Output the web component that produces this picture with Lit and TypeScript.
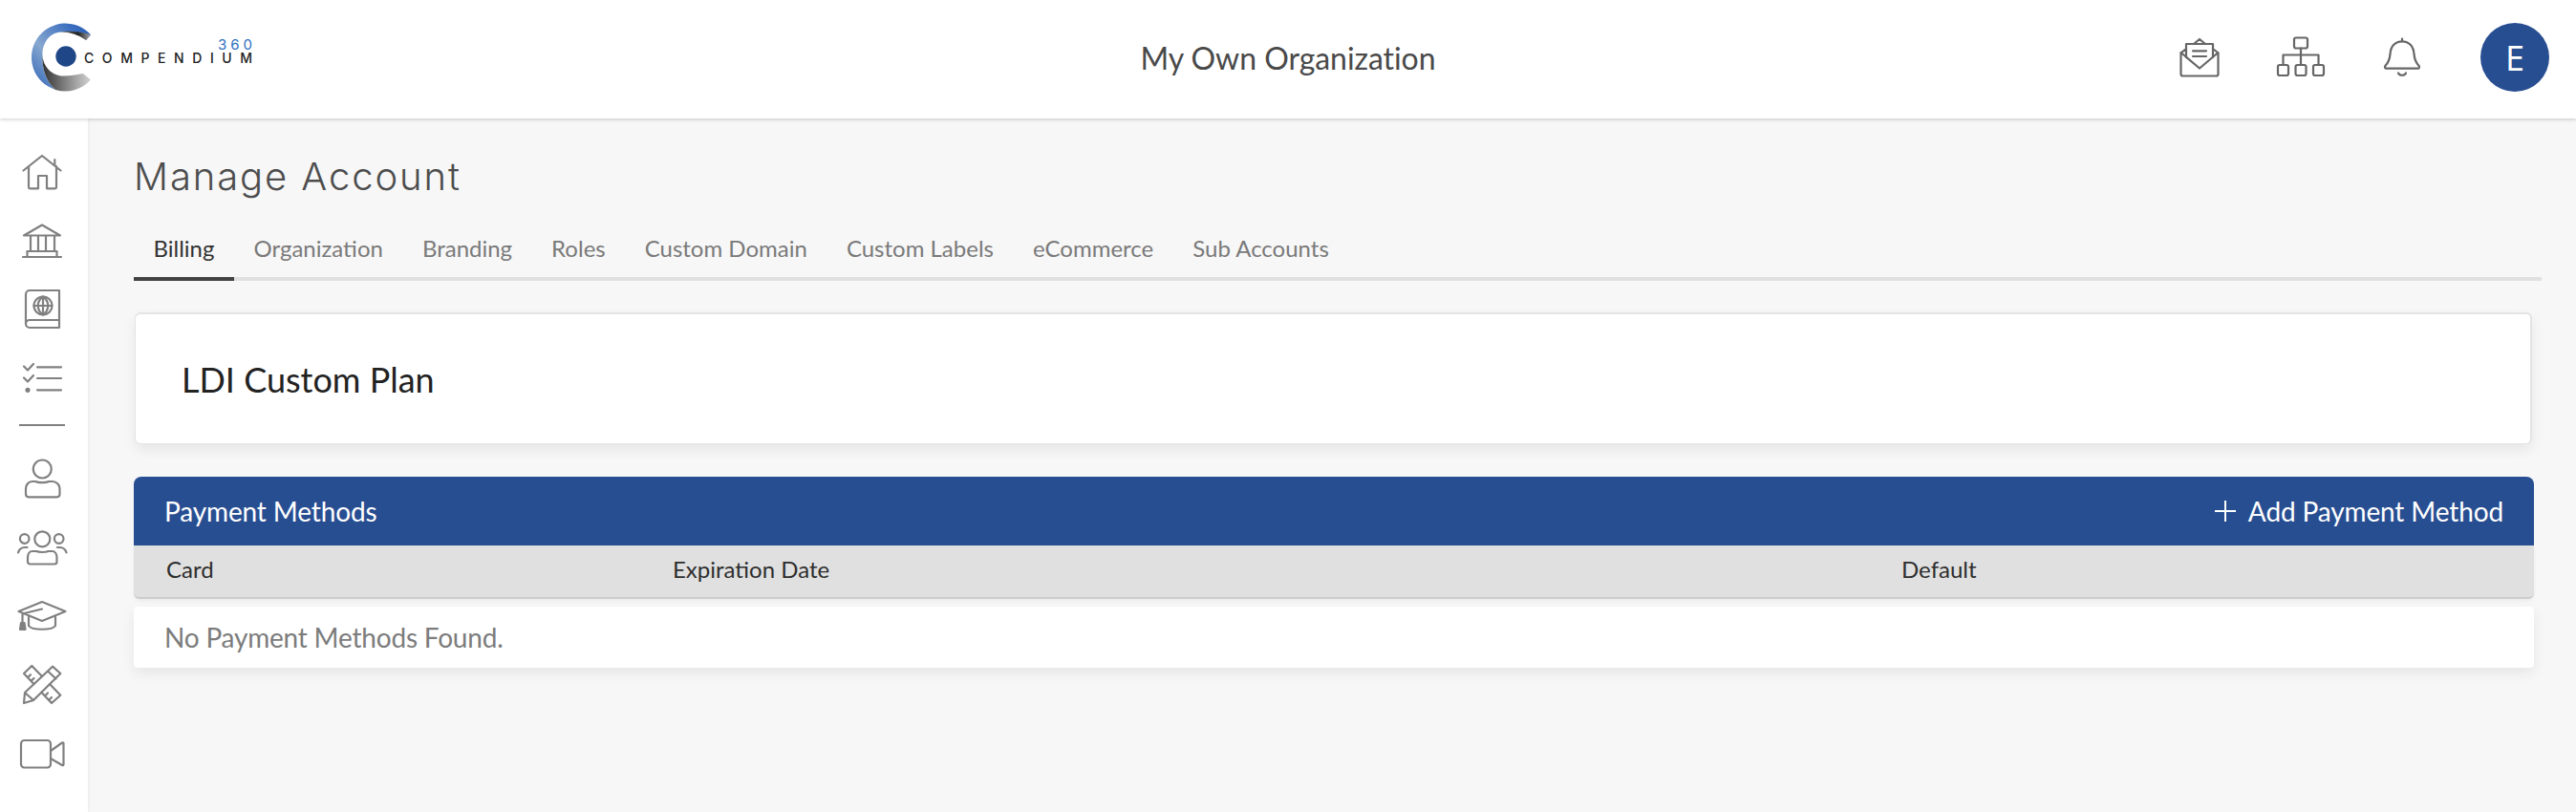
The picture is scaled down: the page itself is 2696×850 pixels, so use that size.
import { LitElement, html, css, svg } from "lit";
import { customElement } from "lit/decorators.js";

const side = [
  svg`<path d="M4.5 22.5 24 7l19.5 15.5M10 18v22a1.3 1.3 0 0 0 1.3 1.300H20V28h9v13.300h8.700A1.300 1.300 0 0 0 39 40V18M37.300 11.200v6"/>`,
  svg`<path d="M24 7.500 5 18.500h38ZM12 19v16M20 19v16M28 19v16M37 19v16M8.500 40v-5h31v5M4 41h40"/>`,
  svg`<path d="M11 4h31v39H11a4 4 0 0 1-4-4V8a4 4 0 0 1 4-4ZM7 39a4 4 0 0 1 4-4h31"/><circle cx="25" cy="20" r="9.500"/><path d="M15.500 20h19M25 10.500V29.500M25 10.500c-7 5-7 14 0 19M25 10.500c7 5 7 14 0 19"/>`,
  svg`<path d="M5 11.500 9 15.500 15 9M5 23.500 9 27.500 15 21M19 12.300h25M19 24h25M19 36.300h25"/><circle cx="9" cy="36.300" r="1.500" fill="#808080"/>`,
  null,
  svg`<circle cx="24.300" cy="14" r="9.500"/><path d="M13.500 27h4c2 1.500 11 1.500 13.500 0h4c4 0 7.500 3.500 7.500 8v5c0 2-1 3.300-3 3.300H10c-2 0-3-1.300-3-3.300v-5c0-4.500 3-8 6.500-8Z"/>`,
  svg`<circle cx="24.300" cy="15.300" r="8"/><circle cx="5.700" cy="15" r="4.800"/><circle cx="41.700" cy="15" r="4.800"/><path d="M-1 29.500a7.500 7.500 0 0 1 7-5.500h2.500M49.500 29.500a7.500 7.500 0 0 0-7-5.500H40M14 28h4c2 1.300 10 1.300 12.500 0h4c3 0 5 3 5 7v4c0 1.500-1 2.500-2.500 2.500H11.500C10 41.500 9 40.500 9 39v-4c0-4 2-7 5-7Z"/>`,
  svg`<path d="M24 9-.5 19 24 29 48.500 19ZM3.500 21.500 24 16.500M10 25v9c3 5 25 5 28 0v-9M3.500 22v10"/><path d="M2 31h3.500l1 7H1Z" fill="#808080"/>`,
  svg`<path d="M5 43 6 32 35 4.700 43.300 12 15 40ZM30 9.500l8.500 8M6 32l9 8"/><path d="M15.400 23.100 5 12 13.300 4 24 15M9 16.300l3-3M12.500 20l3-3M23.400 31.700 34 43 43.300 34.700 32 23.100M27 35.500l3-3M31 40l3-3"/>`,
  svg`<rect x="2" y="10" width="31" height="28.500" rx="3.500"/><path d="M33 21 45 12.500c1-.5 1.500 0 1.500 1V35c0 1-.5 1.500-1.500 1L33 29"/>`,
];

@customElement("app-root")
export class AppRoot extends LitElement {
  static styles = css`
    :host { display: block; min-height: 850px; background: #f7f7f7; font-family: Lato, sans-serif; overflow: hidden; }
    svg.ic { width: 48px; height: 48px; overflow: visible; fill: none; stroke-linecap: round; stroke-linejoin: round; display: block; }
    .top { height: 124px; box-sizing: border-box; padding: 0 28px 4px 0; background: #fff; box-shadow: 0 1px 4px rgba(0,0,0,.2); display: flex; align-items: center; justify-content: space-between; position: relative; z-index: 2; }
    .logo { width: 280px; height: 120px; display: block; }
    .org { font-size: 32px; color: #4a4a4a; position: absolute; left: 0; right: 0; text-align: center; letter-spacing: -0.05px; }
    .acts { display: flex; align-items: center; gap: 58px; position: relative; }
    .acts svg.ic { stroke: #666; stroke-width: 2.2; }
    .avatar { width: 72px; height: 72px; border-radius: 50%; background: #284e92; color: #fff; font: 36px "Open Sans", sans-serif; display: flex; align-items: center; justify-content: center; }
    .body { display: flex; min-height: 726px; }
    .side { width: 92px; flex: none; background: #fff; padding: 20px 4px 0 0; box-sizing: border-box; box-shadow: 1px 0 3px rgba(0,0,0,.06); }
    .cell { height: 72px; display: flex; align-items: center; justify-content: center; }
    .side svg.ic { stroke: #808080; stroke-width: 2.2; }
    .sep { height: 2px; width: 48px; margin: 12px auto 19px; background: #808080; }
    .main { flex: 1; min-width: 0; padding: 38px 36px 0 48px; }
    h1 { margin: 0; height: 46px; font: 300 40px/46px Inter, sans-serif; letter-spacing: 1.9px; color: #4d4d4d; }
    .tabs { margin-top: 22px; height: 64px; box-sizing: border-box; border-bottom: 4px solid #e0e0e0; display: flex; }
    .tab { height: 64px; box-sizing: border-box; padding: 0 20.5px; font-size: 24px; line-height: 60px; color: #7a7a7a; }
    .tab.on { color: #333; border-bottom: 4px solid #424242; }
    .wrap { margin-right: 8px; }
    .plan { margin: 33px 2px 0 1px; height: 138px; box-sizing: border-box; background: #fff; border: 2px solid #e4e4e4; border-width: 2px 2px 1px 1px; border-radius: 6px; box-shadow: 0 6px 14px rgba(0,0,0,.07); display: flex; align-items: center; padding-left: 48px; font-size: 36px; color: #222; }
    .pm { margin-top: 34px; }
    .pmh { height: 72px; background: #284e92; color: #fff; border-radius: 8px 8px 0 0; display: flex; align-items: center; justify-content: space-between; padding: 0 32px; font-size: 28px; letter-spacing: -0.13px; }
    .add { display: flex; align-items: center; gap: 13px; }
    .add svg { width: 22px; height: 22px; stroke: #fff; stroke-width: 2; fill: none; display: block; }
    .cols { height: 56px; box-sizing: border-box; background: #e0e0e0; border-bottom: 2px solid #ccc; border-radius: 0 0 6px 6px; display: grid; grid-template-columns: 530px 1286px 1fr; align-items: center; padding: 0 0 6px 34px; font-size: 24px; color: #2e2e2e; box-shadow: 0 2px 4px rgba(0,0,0,.05); }
    .empty { margin-top: 8px; height: 64px; background: #fff; display: flex; align-items: center; padding-left: 32px; font-size: 28px; letter-spacing: -0.2px; color: #7c7c7c; border-radius: 4px; box-shadow: 0 6px 14px rgba(0,0,0,.07); }
  `;

  render() {
    const tabs = ["Billing", "Organization", "Branding", "Roles", "Custom Domain", "Custom Labels", "eCommerce", "Sub Accounts"];
    return html`
      <div class="top">
        <svg class="logo" viewBox="0 0 280 120">
          <defs>
            <linearGradient id="b" x1="0" y1="1" x2="1" y2="0"><stop offset="0" stop-color="#2a5fb5"/><stop offset=".4" stop-color="#86a7cf"/><stop offset=".8" stop-color="#3d6fc0"/><stop offset="1" stop-color="#2458ae"/></linearGradient>
            <linearGradient id="g" x1="0" y1="0" x2="1" y2="0"><stop offset="0" stop-color="#333"/><stop offset=".5" stop-color="#858585"/><stop offset="1" stop-color="#d4d4d4"/></linearGradient>
            <linearGradient id="d" x1="0" y1="0" x2="1" y2="0"><stop offset="0" stop-color="#777"/><stop offset=".6" stop-color="#222"/><stop offset="1" stop-color="#aaa"/></linearGradient>
          </defs>
          <path d="M95 36.400A35.500 35.500 0 1 0 58 93.900C48 85 44 72 44.500 58C44 45 52 34 64 33.500C68 33 80 33 90 42Z" fill="url(#b)"/>
          <path d="M44.500 58C44 72 48 85 58 93.900A35.500 35.500 0 0 0 95 83.600L87 77C81 78 73 79.500 66 79.500C55 79.500 45 70 44.500 58Z" fill="url(#g)"/>
          <path d="M62 33.500Q78 31 95 36.400L90 42Q78 33 62 33.500Z" fill="url(#d)"/>
          <circle cx="69" cy="59" r="10.700" fill="#1f4788"/>
          <text x="88" y="66" font-family="Inter, sans-serif" font-size="14" font-weight="500" fill="#222" textLength="176">COMPENDIUM</text>
          <text x="228" y="52" font-family="Inter, sans-serif" font-size="15" fill="#2f6fc0" textLength="36">360</text>
        </svg>
        <div class="org">My Own Organization</div>
        <div class="acts">
          <svg class="ic" viewBox="0 0 48 48"><path d="M10 24V10h28v14M5 19l5-4M43 19l-5-4M18 10l6-5 6 5M17 17.300h14M17 23h14"/><path d="M4.500 19v22.500a2 2 0 0 0 2 2h35a2 2 0 0 0 2-2V19L24 35.500Z"/></svg>
          <svg class="ic" viewBox="0 0 48 48"><rect x="17" y="3.500" width="14" height="11" rx="2"/><rect x="0" y="32" width="11" height="11" rx="2"/><rect x="18.500" y="32" width="11" height="11" rx="2"/><rect x="37" y="32" width="11" height="11" rx="2"/><path d="M24 14.500V32M5.500 32V21.500h37V32"/></svg>
          <svg class="ic" viewBox="0 0 48 48"><path d="M24 4.500v2.800c-7 0-12 5-12.500 13.400-.5 6-2 9-5 12-1 1-.5 3 1 3h33c1.500 0 2-2 1-3-3-3-4.500-6-5-12C36 12.300 31 7.300 24 7.300ZM20 40.500c1.500 3 6.500 3 8 0"/></svg>
          <div class="avatar">E</div>
        </div>
      </div>
      <div class="body">
        <nav class="side">
          ${side.map((s) => s ? html`<div class="cell"><svg class="ic" viewBox="0 0 48 48">${s}</svg></div>` : html`<div class="sep"></div>`)}
        </nav>
        <main class="main">
          <h1>Manage Account</h1>
          <div class="tabs">${tabs.map((t, i) => html`<div class="tab ${i === 0 ? "on" : ""}">${t}</div>`)}</div>
          <div class="wrap">
            <div class="plan">LDI Custom Plan</div>
            <section class="pm">
              <div class="pmh"><span>Payment Methods</span><span class="add"><svg viewBox="0 0 22 22"><path d="M11 0v22M0 11h22"/></svg>Add Payment Method</span></div>
              <div class="cols"><span>Card</span><span>Expiration Date</span><span>Default</span></div>
              <div class="empty">No Payment Methods Found.</div>
            </section>
          </div>
        </main>
      </div>
    `;
  }
}
